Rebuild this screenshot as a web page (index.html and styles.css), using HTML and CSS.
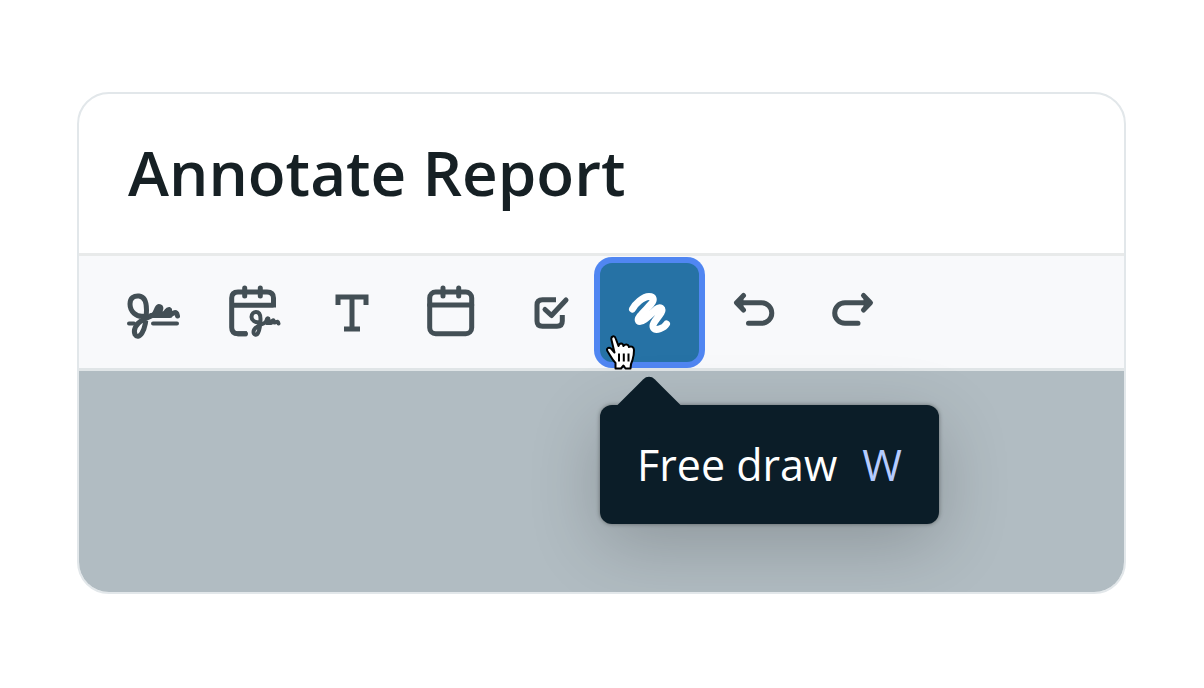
FILE: index.html
```html
<!DOCTYPE html>
<html lang="en">
<head>
  <meta charset="UTF-8">
  <meta name="viewport" content="width=device-width, initial-scale=1.0">
  <title>Annotate Report</title>
  <link rel="stylesheet" href="styles.css">
</head>
<body>
  <main class="card">
    <header class="header">
      <h1 class="title">Annotate Report</h1>
    </header>

    <div class="toolbar" role="toolbar" aria-label="Annotation tools">
      <button class="tool" aria-label="Signature">
        <svg class="icon" viewBox="0 0 63 63">
          <path stroke-width="5" d="M22 35C13 37 7 30 7 23C7 17 11 14.500 16 15C21 15.500 23.500 21 23.500 29C23.500 39 22 47 19 52C16.500 56 13.500 56 12 53.500C10 49 13 43 18 40C23 37 27 36 30 34C34 31 33 26 36 25.500C39 25.500 38 29 36 32C34 35 39 34 42 32C44 30 44 28.500 46 28.500C48 29 45 33 47 33.500C49 34 50 31.500 52 31.500C54 31.500 54 33 54.500 35"/>
          <path stroke-width="5" d="M28 34.500H47M34 31L37 28M44 32H47"/>
          <path stroke-width="4" d="M6 42.500H11M30 42.500H54"/>
        </svg>
      </button>

      <button class="tool" aria-label="Signature with date">
        <svg class="icon" viewBox="0 0 63 63">
          <path stroke-width="5" stroke-linecap="butt" d="M51.500 26.500V17Q51.500 11 45 11H16Q9.700 11 9.700 17V46.500Q9.700 52.700 16 52.700H25M9.700 24.300H51.500"/>
          <path stroke-width="5" d="M22.700 7V15M38.300 7V15M16 52.700H23.500"/>
          <path stroke-width="4" d="M37 41C33 42 29.500 39 29.500 36C29.500 32.500 32 31 34 31C37 31 38.500 34 38.500 38C38.500 44 37.500 49 36 52C34.500 55 31.500 53.500 31.500 51C31.500 48 35 45.500 38 44C42 42.500 44 42 45 38C47 36 47 39 45 42H49C50 39 52 38 52 41.500C54 41.500 56 39 56.500 42.500"/>
        </svg>
      </button>

      <button class="tool" aria-label="Text">
        <svg class="icon" viewBox="0 0 63 63">
          <path stroke-width="5" stroke-linecap="butt" stroke-linejoin="miter" d="M17 24V16H45V24M31 16V48M23 48H39"/>
        </svg>
      </button>

      <button class="tool" aria-label="Date">
        <svg class="icon" viewBox="0 0 63 63">
          <rect x="9.700" y="11" width="42" height="41.700" rx="6" stroke-width="5"/>
          <path stroke-width="5" d="M9.700 24H51.700M23 7V15M38.700 7V15"/>
        </svg>
      </button>

      <button class="tool" aria-label="Checkbox">
        <svg class="icon" viewBox="0 0 63 63">
          <path stroke-width="5" stroke-linecap="butt" d="M37 18.700H23.500Q18 18.700 18 24V40Q18 45.300 23.500 45.300H38Q43.300 45.300 43.300 40V34"/>
          <path stroke-width="5" d="M26 28.500L32.500 34.500L47 19"/>
        </svg>
      </button>

      <div class="tool-wrap">
        <button class="tool active" aria-label="Free draw" aria-pressed="true" aria-describedby="draw-tip">
          <svg class="icon" viewBox="0 0 63 63">
            <path stroke-width="7" d="M14.500 28C17 23 25 15.500 31 15.500C36 15.500 36.500 19 33 23C29 28 18 37 20.500 40C23.500 43 32 34 38 28.500C42 25 46 27.500 43 32C40 37 33 43 35.500 47C38 50.500 46 47 48.500 43"/>
          </svg>
        </button>
        <div class="tooltip" id="draw-tip" role="tooltip">
          <span>Free draw</span>
          <kbd class="key">W</kbd>
        </div>
        <svg class="cursor" viewBox="0 0 32 38">
          <path d="M10.500 34.500V29C7 25.500 5.500 22 3 18C.500 14.500 3.500 12.500 6.500 15L9.500 18.500L6.500 6C5.500 2 9.500 1 10.700 4.500L13.500 12C14.500 8.500 18 9 18.500 12C20 9.500 23.500 10 24 13C26.500 11.500 29 13 29 16C29 21 28.500 23 27.500 26C26 29 25.500 31 25.500 34.500H20.500L18.500 31.500L16 34.500Z"/>
          <path d="M14 19.500V27.500M18.800 19.500V27.500M23.500 19.500V27.500"/>
        </svg>
      </div>

      <div class="history">
        <button class="tool" aria-label="Undo">
          <svg class="icon" viewBox="0 0 63 63">
            <path stroke-width="5" d="M14 21.700H38.500A10.300 10.300 0 0 1 38.500 42.300H25.500M20.500 14.500L13.500 21.700L20.500 29"/>
            <path fill="currentColor" d="M14 21.700L20 16V27.500Z"/>
          </svg>
        </button>
        <button class="tool" aria-label="Redo">
          <svg class="icon" viewBox="0 0 63 63">
            <path stroke-width="5" d="M48 21.700H23A10.300 10.300 0 0 0 23 42.300H36M41.500 14.500L48.500 21.700L41.500 29"/>
            <path fill="currentColor" d="M48 21.700L42 16V27.500Z"/>
          </svg>
        </button>
      </div>
    </div>

    <div class="canvas"></div>
  </main>
</body>
</html>
```
FILE: styles.css
```css
* {
  box-sizing: border-box;
}
body {
  display: flex;
  min-height: 100vh;
  margin: 0;
  padding: 92px 78px 94px 77px;
  background-color: white;
  font-family: "Open Sans", "Noto Sans", sans-serif;
}
.card {
  display: flex;
  flex-direction: column;
  flex: 1;
  overflow: hidden;
  border: 2px solid #e2e7ea;
  border-radius: 32px;
}
.header {
  padding: 35px 49px 37px;
  border-bottom: 3px solid #e8eaea;
}
.title {
  margin: 0;
  color: #162024;
  font-size: 62px;
  font-weight: 600;
  line-height: 87px;
}
.toolbar {
  display: flex;
  align-items: center;
  padding: 7px 26px 6px;
  border-bottom: 3px solid #e0e5e7;
  background-color: #f8f9fb;
}
.tool {
  display: flex;
  align-items: center;
  justify-content: center;
  width: 99px;
  height: 99px;
  padding: 0;
  border: none;
  border-radius: 12px;
  background-color: transparent;
  color: #434f55;
  cursor: pointer;
}
.icon {
  width: 63px;
  height: 63px;
  fill: none;
  stroke: currentColor;
  stroke-linecap: round;
  stroke-linejoin: round;
}
.tool-wrap {
  position: relative;
}
.active {
  background-color: #2672a5;
  color: white;
  box-shadow: 0 0 0 6px #5086f2;
}
.history {
  display: flex;
  margin-left: 6px;
}

/* tooltip under the active tool */
.tooltip {
  position: absolute;
  top: 142px;
  left: 0;
  display: flex;
  gap: 25px;
  padding: 30px 37px 29px;
  border-radius: 12px;
  background-color: #0b1d28;
  color: white;
  font-size: 43px;
  line-height: 60px;
  white-space: nowrap;
  box-shadow: 0 0 4px rgba(0, 0, 0, 0.4), 0 20px 72px rgba(0, 0, 0, 0.2);
}
.tooltip::before {
  content: "";
  position: absolute;
  top: -22px;
  left: 26px;
  width: 46px;
  height: 46px;
  border-radius: 8px 0 0 0;
  background-color: #0b1d28;
  transform: rotate(45deg);
}
.key {
  color: #b5cbff;
  font-family: inherit;
  font-size: inherit;
}
.cursor {
  position: absolute;
  top: 71px;
  left: 5px;
  width: 32px;
  height: 38px;
  fill: white;
  stroke: black;
  stroke-width: 2;
  stroke-linejoin: round;
  pointer-events: none;
}
.canvas {
  flex: 1;
  background-color: #b1bcc2;
}
```
